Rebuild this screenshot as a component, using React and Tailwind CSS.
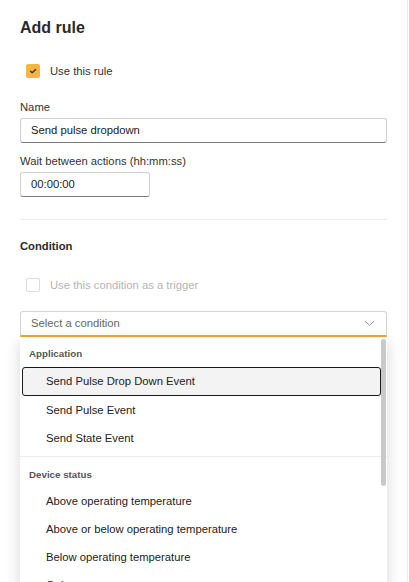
import React from "react";

const groups = [
  {
    title: "Application",
    items: ["Send Pulse Drop Down Event", "Send Pulse Event", "Send State Event"],
  },
  {
    title: "Device status",
    items: [
      "Above operating temperature",
      "Above or below operating temperature",
      "Below operating temperature",
      "Going open",
      "Going closed",
    ],
  },
];

const Check = () => (
  <svg viewBox="0 0 14 14" className="w-[14px] h-[14px]">
    <path d="M4.5 7.2 6.2 8.8 9.6 5.4" fill="none" stroke="#3a3a3a" strokeWidth="1.4" strokeLinecap="round" strokeLinejoin="round" />
  </svg>
);

export default function App() {
  return (
    <div className="w-[409px] h-[582px] overflow-hidden bg-white font-['Liberation_Sans',Arial,sans-serif] text-[#333]">
      <div className="w-[408px] h-full border-r border-[#ececec] px-5 pt-[18px]">
        <h1 className="text-[16px] font-bold text-[#2a2a2a] leading-5">Add rule</h1>

        {/* Use this rule */}
        <label className="flex items-center gap-[10px] mt-[26px] pl-[6px] h-[14px]">
          <span className="w-[14px] h-[14px] rounded-[2px] bg-[#f7b53f] flex items-center justify-center">
            <Check />
          </span>
          <span className="text-[11.25px] text-[#333]">Use this rule</span>
        </label>

        {/* Name */}
        <div className="mt-[22px] text-[11.25px] leading-[14px]">Name</div>
        <div className="mt-[4px] h-[25px] border border-[#cfcfcf] border-b-[#7a7a7a] rounded-[3px] flex items-center px-[10px] text-[11.25px] text-[#222]">
          Send pulse dropdown
        </div>

        {/* Wait */}
        <div className="mt-[11px] text-[11.25px] leading-[14px]">Wait between actions (hh:mm:ss)</div>
        <div className="mt-[4px] w-[130px] h-[25px] border border-[#cfcfcf] border-b-[#7a7a7a] rounded-[3px] flex items-center px-[10px] text-[11.25px] text-[#222]">
          00:00:00
        </div>

        <div className="mt-[22px] h-px bg-[#ebebeb]" />

        <h2 className="mt-[19px] text-[11.25px] font-bold text-[#2a2a2a] leading-[14px]">Condition</h2>

        <label className="flex items-center gap-[10px] mt-[25px] pl-[6px] h-[14px]">
          <span className="w-[14px] h-[14px] rounded-[2px] border border-[#dcdcdc] bg-white" />
          <span className="text-[11.25px] text-[#b5b5b5]">Use this condition as a trigger</span>
        </label>

        {/* Select */}
        <div className="relative mt-[19px]">
          <div className="h-[26px] border border-[#d4d4d4] border-b-2 border-b-[#f0a53a] rounded-t-[3px] flex items-center justify-between pl-[10px] pr-[11px] text-[11.25px] text-[#666]">
            <span>Select a condition</span>
            <svg viewBox="0 0 12 8" className="w-[11px] h-[7px]">
              <path d="M1 1.5 6 6 11 1.5" fill="none" stroke="#8a8a8a" strokeWidth="1.1" />
            </svg>
          </div>

          {/* Dropdown */}
          <div className="absolute left-0 right-0 top-[27px] bg-white shadow-[0_4px_14px_rgba(0,0,0,0.16)] pt-[10px]">
            <div className="absolute right-[1px] top-[1px] w-[5px] h-[147px] rounded-full bg-[#c9c9c9]" />
            {groups.map((g, gi) => (
              <div key={g.title} className={gi > 0 ? "border-t border-[#ececec] mt-[4px] pt-[12px]" : ""}>
                <div className={`px-[9px] text-[9.75px] font-bold text-[#555] leading-[12px] ${gi > 0 ? "mb-[6px]" : "mb-[7px]"}`}>{g.title}</div>
                {g.items.map((it, i) => (
                  <div
                    key={it}
                    className={
                      gi === 0 && i === 0
                        ? "mx-[2px] mr-[6px] h-[29px] flex items-center pl-[23px] text-[11.25px] text-[#222] bg-[#f3f3f3] border-[1.5px] border-[#1a1a1a] rounded-[3px]"
                        : "h-[28px] flex items-center pl-[26px] text-[11.25px] text-[#222]"
                    }
                  >
                    {it}
                  </div>
                ))}
              </div>
            ))}
          </div>
        </div>
      </div>
    </div>
  );
}
